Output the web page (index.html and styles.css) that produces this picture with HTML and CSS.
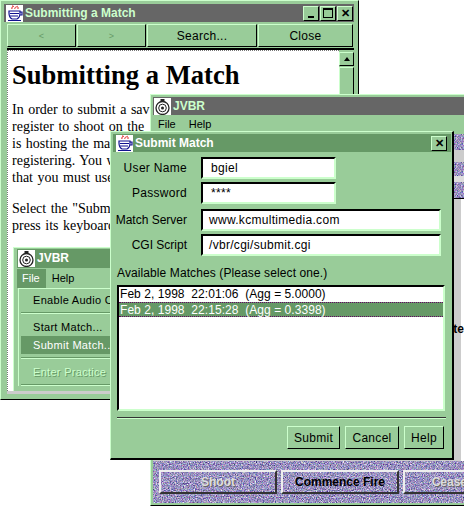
FILE: index.html
```html
<!DOCTYPE html>
<html lang="en">
  <head>
    <meta charset="UTF-8" />
    <title>Submitting a Match</title>
    <link rel="stylesheet" href="styles.css">
  </head>
  <body>
    <svg class="defs" width="0" height="0">
      <filter id="grain" x="0" y="0" width="100%" height="100%" color-interpolation-filters="sRGB">
        <feTurbulence type="fractalNoise" baseFrequency="0.85" numOctaves="2" seed="4" />
        <feColorMatrix values="1.0 0.5 0 0 -0.15  0.5 1.0 0 0 -0.18  0.4 0.4 0.5 0 0.1  0 0 0 0 1" />
      </filter>
      <symbol id="cup" viewBox="0 0 17 17">
        <rect width="17" height="17" fill="#fff" />
        <path d="M6 4 C5 2 7 2 8 1 M9 4 C8 2 11 2 12 1 M6 1 h1 M11 3 h2" fill="none" stroke="#e02020" />
        <path d="M3 6 h11 v2 c0 3 -1 5 -3 6 h-5 c-2 -1 -3 -3 -3 -6 z M14 7 h2 v3 h-2 M2 15.5 h13" fill="none" stroke="#101090" stroke-width="1.2" />
        <path d="M4 8.5 h9 M4 11 h8" stroke="#101090" />
      </symbol>
      <symbol id="target" viewBox="0 0 17 17">
        <rect width="17" height="17" fill="#fff" />
        <rect x="6.5" y="1" width="4" height="3" fill="#222" />
        <circle cx="8.5" cy="10" r="6.5" fill="none" stroke="#222" stroke-width="1.3" />
        <circle cx="8.5" cy="10" r="3.8" fill="none" stroke="#222" />
        <circle cx="8.5" cy="10" r="1.5" fill="#222" />
      </symbol>
    </svg>

    <div class="window help-window">
      <div class="titlebar">
        <svg class="icon"><use href="#cup" /></svg>
        <span class="title-text">Submitting a Match</span>
        <div class="controls">
          <span class="ctl ctl-min"></span>
          <span class="ctl ctl-max"></span>
          <span class="ctl">&#10005;</span>
        </div>
      </div>
      <div class="toolbar">
        <span class="tool tool-arrow">&lt;</span>
        <span class="tool tool-arrow">&gt;</span>
        <span class="tool tool-search">Search...</span>
        <span class="tool tool-close">Close</span>
      </div>
      <div class="doc-frame">
        <div class="doc">
          <h1>Submitting a Match</h1>
          <p>In order to submit a sav<br>register to shoot on the<br>is hosting the mat<br>registering. You w<br>that you must use</p>
          <p>Select the "Subm<br>press its keyboard</p>
          <div class="shot">
            <div class="shot-title">
              <svg class="icon"><use href="#target" /></svg>
              <span>JVBR</span>
            </div>
            <div class="shot-menu">
              <span class="shot-file">File</span>
              <span>Help</span>
            </div>
            <div class="shot-drop">
              <div class="shot-item shot-first">Enable Audio Co</div>
              <div class="shot-sep"></div>
              <div class="shot-item">Start Match...</div>
              <div class="shot-item shot-active">Submit Match...</div>
              <div class="shot-sep"></div>
              <div class="shot-item shot-off">Enter Practice M</div>
              <div class="shot-sep"></div>
            </div>
          </div>
        </div>
        <div class="scrollbar">
          <span class="scroll-up"></span>
          <span class="scroll-track"></span>
        </div>
      </div>
    </div>

    <div class="window game-window">
      <div class="game-title">
        <svg class="icon"><use href="#target" /></svg>
        <span class="title-text">JVBR</span>
      </div>
      <div class="game-menu">
        <span>File</span>
        <span>Help</span>
      </div>
      <div class="game-body">
        <div class="noise strip-a"></div>
        <div class="strip-gap"></div>
        <div class="noise strip-b"></div>
        <div class="strip-white"></div>
        <div class="noise strip-c"></div>
        <div class="game-panel">
          <span class="panel-text">te</span>
        </div>
        <div class="noise game-actions">
          <span class="fire-btn fire-off">Shoot</span>
          <span class="fire-btn">Commence Fire</span>
          <span class="fire-btn fire-off">Cease Fire</span>
        </div>
      </div>
    </div>

    <div class="window dialog">
      <div class="dialog-title">
        <svg class="icon"><use href="#cup" /></svg>
        <span class="dialog-title-text">Submit Match</span>
        <span class="ctl dialog-close">&#10005;</span>
      </div>
      <div class="form">
        <label>User Name</label>
        <div class="field field-short">bgiel</div>
        <label>Password</label>
        <div class="field field-short">****</div>
        <label class="gap-row tight">Match Server</label>
        <div class="field gap-row">www.kcmultimedia.com</div>
        <label class="gap-row tight">CGI Script</label>
        <div class="field gap-row">/vbr/cgi/submit.cgi</div>
      </div>
      <div class="list-label">Available Matches (Please select one.)</div>
      <div class="list">
        <div class="list-item">Feb 2, 1998&nbsp; 22:01:06&nbsp; (Agg = 5.0000)</div>
        <div class="list-item list-selected">Feb 2, 1998&nbsp; 22:15:28&nbsp; (Agg = 0.3398)</div>
      </div>
      <div class="dialog-rule"></div>
      <div class="dialog-buttons">
        <span class="btn btn-submit">Submit</span>
        <span class="btn btn-cancel">Cancel</span>
        <span class="btn btn-help">Help</span>
      </div>
    </div>
  </body>
</html>
```

FILE: styles.css
```css
html,
body {
  margin: 0;
  height: 100%;
  background-color: #fff;
  overflow: hidden;
}

body {
  font-family: 'Liberation Sans', Arial, sans-serif;
  font-size: 12px;
  color: #000;
  letter-spacing: 0.3px;
}

.defs {
  position: absolute;
}

.icon {
  width: 17px;
  height: 17px;
  flex: none;
}

/* windows sit on a free desktop */
.window {
  position: absolute;
  box-sizing: border-box;
  background-color: #99cc99;
  overflow: hidden;
}

.title-text {
  font-weight: bold;
  color: #ccffcc;
  letter-spacing: 0;
}

.ctl {
  box-sizing: border-box;
  width: 16px;
  height: 15px;
  display: flex;
  align-items: center;
  justify-content: center;
  background-color: #99cc99;
  border: 1px solid;
  border-color: #ccffcc #000 #000 #ccffcc;
  font-size: 11px;
  font-weight: bold;
  letter-spacing: 0;
}

/* help window */
.help-window {
  left: 0;
  top: 0;
  width: 359px;
  height: 400px;
  padding: 3px 4px 0 3px;
  border: 1px solid #ccffcc;
  border-right-color: #000;
  border-bottom-color: #000;
}

.titlebar {
  display: flex;
  align-items: center;
  gap: 2px;
  height: 18px;
  padding-left: 2px;
  background-color: #666;
}

.controls {
  display: flex;
  gap: 1px;
  margin-left: auto;
  padding-right: 1px;
}

.ctl-min::after {
  content: "";
  width: 6px;
  height: 2px;
  margin-top: 8px;
  background-color: #000;
}

.ctl-max::after {
  content: "";
  width: 8px;
  height: 7px;
  border: 1px solid #000;
  border-top-width: 2px;
}

.toolbar {
  display: flex;
  gap: 1px;
  height: 23px;
  margin: 2px 0 0 3px;
}

.tool {
  box-sizing: border-box;
  display: flex;
  align-items: center;
  justify-content: center;
  border: 1px solid;
  border-color: #ccffcc #000 #000 #ccffcc;
}

.tool-arrow {
  width: 69px;
  color: #669966;
  font-size: 9px;
}

.tool-search {
  width: 110px;
}

.tool-close {
  width: 95px;
}

.doc-frame {
  box-sizing: border-box;
  display: flex;
  height: 346px;
  margin: 1px 0 0 3px;
  border-top: 2px solid #000;
  border-bottom: 3px solid #ccc;
}

.doc {
  flex: 1;
  padding: 10px 0 0 4px;
  background-color: #fff;
  border: 1px dotted #777;
  border-right: 0;
  border-bottom: 0;
  overflow: hidden;
  font-family: 'Liberation Serif', 'Times New Roman', serif;
  font-size: 14px;
  line-height: 17px;
  letter-spacing: 0;
  white-space: nowrap;
}

h1 {
  margin: 0 0 12px;
  font-size: 26.6px;
  line-height: 28px;
}

.doc p {
  margin: 0 0 14px;
  word-spacing: 1px;
}

.scrollbar {
  display: flex;
  flex-direction: column;
  gap: 1px;
  width: 15px;
  padding-top: 2px;
  background-color: #99cc99;
}

.scroll-up {
  box-sizing: border-box;
  height: 14px;
  border: 1px solid;
  border-color: #ccffcc #000 #000 #ccffcc;
  display: flex;
  align-items: center;
  justify-content: center;
}

.scroll-up::after {
  content: "";
  border: 3px solid transparent;
  border-top: 0;
  border-bottom: 4px solid #000;
}

.scroll-track {
  flex: 1;
  border: 1px solid;
  border-color: #ccffcc #000 #000 #ccffcc;
}

/* screenshot of the main window, embedded in the help text */
.shot {
  box-sizing: border-box;
  margin: -1px 0 0 1px;
  width: 140px;
  height: 145px;
  padding: 1px 0 0 3px;
  background-color: #99cc99;
  border: 1px solid #ccffcc;
  font-family: 'Liberation Sans', Arial, sans-serif;
  font-size: 11px;
  line-height: 15px;
  letter-spacing: 0.3px;
}

.shot-title {
  display: flex;
  align-items: center;
  gap: 2px;
  height: 19px;
  padding-left: 1px;
  background-color: #669966;
  color: #fff;
  font-size: 12px;
  font-weight: bold;
  letter-spacing: 0;
}

.shot-menu {
  display: flex;
  gap: 6px;
  align-items: center;
  height: 19px;
  padding-top: 1px;
  letter-spacing: 0;
}

.shot-file {
  padding: 2px 6px 2px 5px;
  background-color: #669966;
  color: #fff;
}

.shot-drop {
  margin-left: 1px;
  padding-left: 2px;
  border-left: 1px solid #ccffcc;
  border-top: 1px solid #ccffcc;
}

.shot-item {
  height: 18px;
  padding-left: 12px;
  line-height: 18px;
}

.shot-first {
  margin-top: 2px;
}

.shot-sep {
  height: 1px;
  margin: 3px 0 4px;
  background-color: #669966;
  border-bottom: 1px solid #ccffcc;
}

.shot-active {
  background-color: #669966;
  color: #fff;
}

.shot-off {
  color: #ccffcc;
  text-shadow: 1px 1px 0 #669966;
}

/* game window behind the dialog */
.game-window {
  left: 150px;
  top: 94px;
  width: 314px;
  height: 412px;
  padding: 2px 0 2px 2px;
  border-top: 1px solid #ccffcc;
  border-left: 1px solid #ccffcc;
  border-bottom: 1px solid #000;
  display: flex;
  flex-direction: column;
}

.game-title {
  display: flex;
  align-items: center;
  gap: 2px;
  height: 18px;
  padding-left: 1px;
  background-color: #666;
  flex: none;
}

.game-menu {
  display: flex;
  gap: 13px;
  height: 19px;
  padding: 3px 0 0 5px;
  box-sizing: border-box;
  flex: none;
  font-size: 11px;
  letter-spacing: 0;
}

.game-body {
  flex: 1;
  display: flex;
  flex-direction: column;
  background-color: #ccc;
}

.noise {
  position: relative;
  overflow: hidden;
  flex: none;
}

.noise::before {
  content: "";
  position: absolute;
  inset: 0;
  background-color: #99c;
  filter: url(#grain);
}

.strip-a {
  height: 16px;
}

.strip-gap {
  height: 12px;
  background-color: #ccc;
  flex: none;
}

.strip-b {
  height: 14px;
}

.strip-white {
  height: 6px;
  background-color: #ddd;
  flex: none;
}

.strip-c {
  height: 16px;
  border-bottom: 1px solid #000;
}

.game-panel {
  flex: 1;
  display: flex;
  justify-content: flex-end;
  padding-top: 123px;
  border-right: 3px solid #fff;
  font-weight: bold;
  letter-spacing: 0;
}

.panel-text {
  margin-right: -3px;
}

.game-actions {
  display: flex;
  gap: 4px;
  height: 42px;
  padding: 9px 0 0 6px;
  box-sizing: border-box;
  font-weight: bold;
  letter-spacing: 0;
}

.fire-btn {
  position: relative;
  box-sizing: border-box;
  flex: none;
  width: 118px;
  height: 24px;
  display: flex;
  align-items: center;
  justify-content: center;
  border: 2px solid;
  border-color: #eee #333 #333 #eee;
}

.fire-off {
  color: #ddd;
  text-shadow: 1px 1px 0 #666;
}

/* Submit Match dialog */
.dialog {
  left: 110px;
  top: 131px;
  width: 344px;
  height: 329px;
  padding: 2px 1px 0 2px;
  border: 1px solid #ccffcc;
  border-right: 2px solid #000;
  border-bottom: 2px solid #000;
}

.dialog-title {
  display: flex;
  align-items: center;
  gap: 2px;
  height: 18px;
  padding: 0 4px 0 3px;
  background-color: #669966;
}

.dialog-title-text {
  color: #fff;
  font-weight: bold;
  letter-spacing: 0;
}

.dialog-close {
  margin-left: auto;
}

.form {
  display: grid;
  grid-template-columns: 73px 240px;
  column-gap: 14px;
  row-gap: 3px;
  grid-auto-rows: 22px;
  margin-top: 5px;
  padding-left: 1px;
}

.form label {
  display: flex;
  align-items: center;
  justify-content: flex-end;
  white-space: nowrap;
}

.form .tight {
  letter-spacing: 0;
}

.field {
  box-sizing: border-box;
  display: flex;
  align-items: center;
  padding-left: 6px;
  background-color: #fff;
  border: 2px solid;
  border-color: #000 #ccffcc #ccffcc #000;
}

.field-short {
  width: 135px;
  padding-left: 8px;
}

.gap-row {
  margin-top: 2px;
  margin-bottom: -2px;
}

.list-label {
  margin: 12px 0 0 4px;
  line-height: 14px;
  letter-spacing: 0.1px;
}

.list {
  box-sizing: border-box;
  width: 328px;
  height: 126px;
  margin: 5px 0 0 4px;
  background-color: #fff;
  border: 2px solid;
  border-color: #000 #ccffcc #ccffcc #000;
}

.list-item {
  box-sizing: border-box;
  height: 15px;
  padding-left: 1px;
  line-height: 14px;
  letter-spacing: 0.05px;
  white-space: nowrap;
}

.list-selected {
  background-color: #669966;
  color: #fff;
  border-top: 1px dotted #606;
  border-bottom: 1px dotted #606;
}

.dialog-rule {
  height: 1px;
  margin: 6px 5px 0 4px;
  background-color: #333;
  border-bottom: 1px solid #ccffcc;
}

.dialog-buttons {
  display: flex;
  justify-content: flex-end;
  gap: 5px;
  margin-top: 7px;
  padding-right: 7px;
}

.btn {
  box-sizing: border-box;
  display: flex;
  align-items: center;
  justify-content: center;
  height: 23px;
  border: 1px solid;
  border-color: #ccffcc #000 #000 #ccffcc;
}

.btn-submit {
  width: 53px;
}

.btn-cancel {
  width: 54px;
}

.btn-help {
  width: 40px;
}
```
